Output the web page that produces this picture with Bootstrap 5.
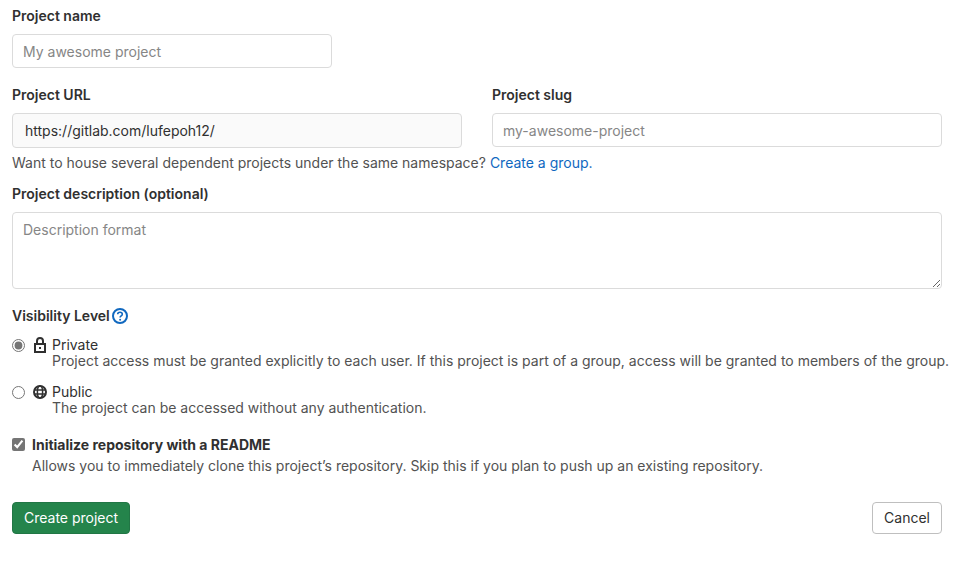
<!DOCTYPE html>
<html lang="en">
<head>
<meta charset="utf-8">
<meta name="viewport" content="width=device-width, initial-scale=1">
<title>New project</title>
<link href="https://cdn.jsdelivr.net/npm/bootstrap@5.3.0/dist/css/bootstrap.min.css" rel="stylesheet">
<style>
  body { font-family: Inter, "Liberation Sans", sans-serif; font-size: 14px; line-height: 21px; color: #303030; background: #fff; }
  .project-form { padding: 5px 27px 28px 12px; }
  .field-group { margin-bottom: 16px; }
  .form-label { display: block; font-weight: 600; margin-bottom: 8px; }
  .form-control { height: 34px; padding: 6px 10px; font-size: 14px; line-height: 20px; color: #303030; border-color: #dbdbdb; border-radius: 4px; }
  .form-control::placeholder { color: #868686; }
  .form-control.namespace-url { height: 35px; padding: 6px 12px; background: #fafafa; }
  textarea.form-control { height: 77px; line-height: 21px; }
  .name-field { max-width: 320px; }
  .url-row { --bs-gutter-x: 30px; }
  .hint { color: #525252; }
  .group-hint { margin: 4px 0 10px; }
  .form-link { color: #1068bf; text-decoration: none; }
  .visibility-label { gap: 2px; }
  .levels { margin-right: -15px; }
  .level-list { padding-top: 3px; }
  .level { line-height: 16px; margin-bottom: 15px; }
  .tick { width: 13px; height: 13px; margin: 0; accent-color: #757575; flex: none; }
  .level-tick { margin-top: 2px; }
  .level-icon { width: 16px; height: 16px; margin: 0 4px 0 7px; flex: none; }
  .readme-option { margin: 3px 0 26px; }
  .readme-tick { margin: 4px 7px 0 0; }
  .action { font-size: 14px; line-height: 16px; padding: 7px 11px; border-radius: 4px; }
  .btn-create { --bs-btn-color: #fff; --bs-btn-bg: #24844b; --bs-btn-border-color: #217645; --bs-btn-hover-color: #fff; --bs-btn-hover-bg: #217645; --bs-btn-hover-border-color: #155635; }
  .btn-cancel { --bs-btn-color: #303030; --bs-btn-bg: #fff; --bs-btn-border-color: #bfbfbf; --bs-btn-hover-bg: #f0f0f0; --bs-btn-hover-border-color: #868686; }
</style>
</head>
<body>
<form class="project-form">
  <div class="field-group">
    <label class="form-label" for="name">Project name</label>
    <input class="form-control name-field" id="name" type="text" placeholder="My awesome project">
  </div>
  <div class="row url-row">
    <div class="col-6">
      <label class="form-label" for="url">Project URL</label>
      <input class="form-control namespace-url" id="url" type="text" value="https://gitlab.com/lufepoh12/" readonly>
    </div>
    <div class="col-6">
      <label class="form-label" for="slug">Project slug</label>
      <input class="form-control" id="slug" type="text" placeholder="my-awesome-project">
    </div>
  </div>
  <p class="hint group-hint">Want to house several dependent projects under the same namespace? <a class="form-link" href="#">Create a group.</a></p>
  <div class="field-group">
    <label class="form-label" for="description">Project description (optional)</label>
    <textarea class="form-control" id="description" placeholder="Description format"></textarea>
  </div>
  <fieldset class="levels" aria-labelledby="visibility">
    <div class="form-label visibility-label d-flex align-items-center" id="visibility">Visibility Level
      <a class="form-link d-flex" href="#" aria-label="Help">
        <svg width="16" height="16" viewBox="0 0 16 16" fill="none" stroke="currentColor" stroke-width="2" aria-hidden="true"><circle cx="8" cy="8" r="7"/><path d="M5.7 6.3C5.7 5 6.7 4.3 8 4.3s2.3.8 2.3 2c0 1.6-2.2 1.5-2.2 3.2" stroke-width="1.6"/><circle cx="8.1" cy="11.7" r="1" fill="currentColor" stroke="none"/></svg>
      </a>
    </div>
    <div class="level-list">
      <div class="level d-flex">
        <input class="tick level-tick" type="radio" name="visibility" id="private" checked>
        <svg class="level-icon" viewBox="0 0 16 16" fill="none" stroke="currentColor" stroke-width="2" aria-hidden="true"><path d="M3 7h10v8H3z"/><path d="M5 7V4a3 3 0 0 1 6 0v3"/><rect x="7" y="10" width="2" height="2" fill="currentColor" stroke="none"/></svg>
        <div><label class="d-block" for="private">Private</label><div class="hint">Project access must be granted explicitly to each user. If this project is part of a group, access will be granted to members of the group.</div></div>
      </div>
      <div class="level d-flex">
        <input class="tick level-tick" type="radio" name="visibility" id="public">
        <svg class="level-icon" viewBox="0 0 16 16" fill="none" stroke="currentColor" stroke-width="2" aria-hidden="true"><circle cx="8" cy="8" r="6"/><ellipse cx="8" cy="8" rx="2.6" ry="6" stroke-width="1.5"/><path d="M2 6h12M2 10h12" stroke-width="1.4"/></svg>
        <div><label class="d-block" for="public">Public</label><div class="hint">The project can be accessed without any authentication.</div></div>
      </div>
    </div>
  </fieldset>
  <div class="readme-option d-flex">
    <input class="tick readme-tick" type="checkbox" id="readme" checked>
    <div><label class="d-block fw-bold" for="readme">Initialize repository with a README</label><div class="hint">Allows you to immediately clone this project’s repository. Skip this if you plan to push up an existing repository.</div></div>
  </div>
  <div class="d-flex justify-content-between">
    <button class="btn btn-create action" type="submit">Create project</button>
    <button class="btn btn-cancel action" type="button">Cancel</button>
  </div>
</form>
<script src="https://cdn.jsdelivr.net/npm/bootstrap@5.3.0/dist/js/bootstrap.bundle.min.js"></script>
</body>
</html>
